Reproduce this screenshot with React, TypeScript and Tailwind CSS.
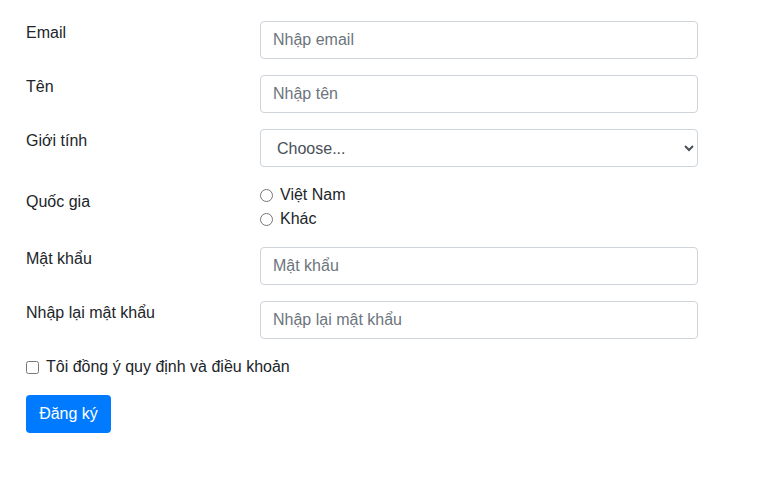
import React from "react";

const inputCls =
  "block w-full h-[38px] px-[12px] py-[6px] text-[16px] leading-[24px] text-[#495057] bg-white border border-[#ced4da] rounded-[4px] placeholder:text-[#6c757d] outline-none";

function Row({ label, children, legend }: { label: string; children: React.ReactNode; legend?: boolean }) {
  return (
    <div className="flex mb-[16px]">
      <div className={`w-[234px] px-[15px] ${legend ? "pt-[7px]" : ""}`}>
        <label className="block leading-[24px]">{label}</label>
      </div>
      <div className="w-[468px] px-[15px]">{children}</div>
    </div>
  );
}

export default function App() {
  return (
    <div
      className="min-h-[485px] bg-white text-[16px] leading-[24px] text-[#212529] pt-[21px] pl-[11px]"
      style={{ fontFamily: '"Liberation Sans", Arial, sans-serif' }}
    >
      <form className="w-[702px]" onSubmit={(e) => e.preventDefault()}>
        <Row label="Email">
          <input className={inputCls} type="email" placeholder="Nhập email" />
        </Row>
        <Row label="Tên">
          <input className={inputCls} type="text" placeholder="Nhập tên" />
        </Row>
        <Row label="Giới tính">
          <select className={inputCls} defaultValue="">
            <option value="">Choose...</option>
            <option>Nam</option>
            <option>Nữ</option>
          </select>
        </Row>
        <Row label="Quốc gia" legend>
          <div className="flex flex-col">
            <label className="flex items-center h-[24px]">
              <input type="radio" name="country" className="w-[13px] h-[13px] m-0 mr-[7px]" />
              <span>Việt Nam</span>
            </label>
            <label className="flex items-center h-[24px]">
              <input type="radio" name="country" className="w-[13px] h-[13px] m-0 mr-[7px]" />
              <span>Khác</span>
            </label>
          </div>
        </Row>
        <Row label="Mật khẩu">
          <input className={inputCls} type="password" placeholder="Mật khẩu" />
        </Row>
        <Row label="Nhập lại mật khẩu">
          <input className={inputCls} type="password" placeholder="Nhập lại mật khẩu" />
        </Row>
        <div className="px-[15px] mb-[16px]">
          <label className="flex items-center h-[24px]">
            <input type="checkbox" className="w-[13px] h-[13px] m-0 mr-[7px]" />
            <span>Tôi đồng ý quy định và điều khoản</span>
          </label>
        </div>
        <div className="px-[15px]">
          <button
            type="submit"
            className="w-[85px] h-[38px] bg-[#007bff] text-white rounded-[4px] leading-[24px] text-[16px] text-center"
          >
            Đăng ký
          </button>
        </div>
      </form>
    </div>
  );
}
